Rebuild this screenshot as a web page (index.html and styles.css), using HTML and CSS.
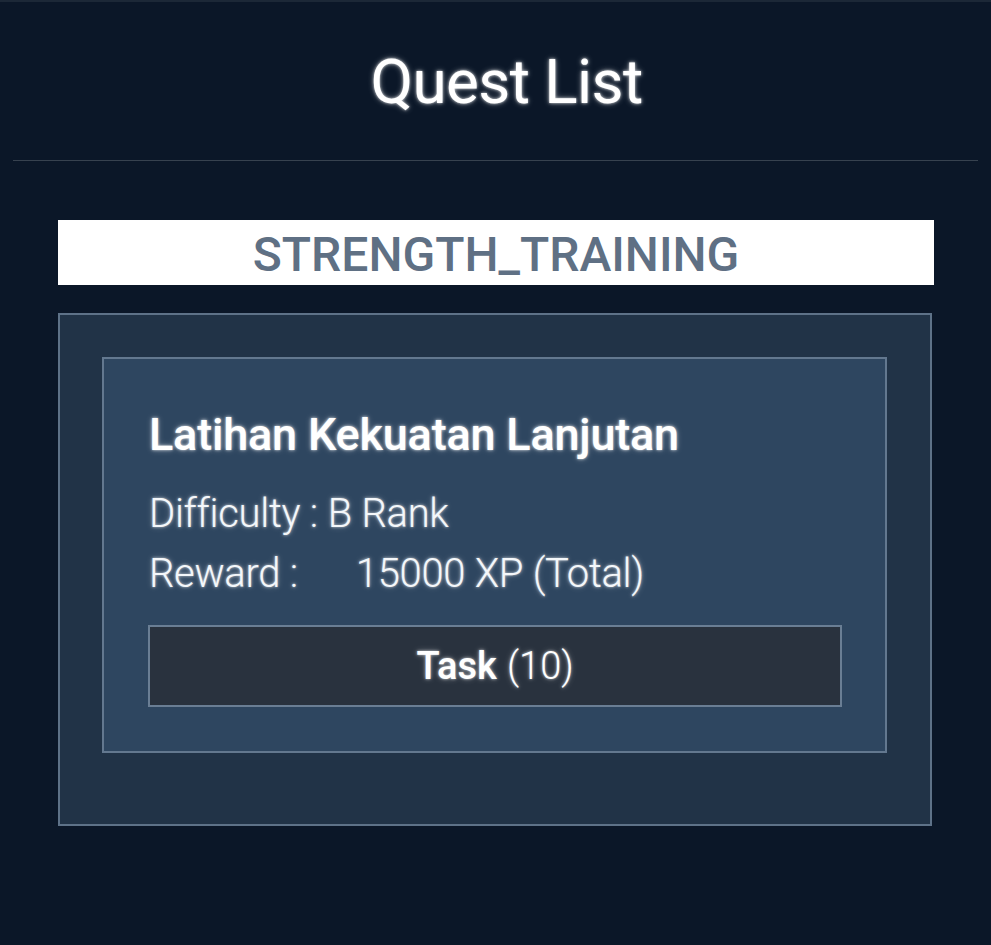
FILE: index.html
```html
<!DOCTYPE html>
<html>
<head>
<meta charset="utf-8">
<link rel="stylesheet" href="styles.css">
</head>
<body>
<div class="page">
  <header class="header">
    <h1 class="title">Quest List</h1>
  </header>
  <main class="content">
    <div class="category">STRENGTH_TRAINING</div>
    <section class="outer">
      <div class="quest">
        <h2 class="quest-title">Latihan Kekuatan Lanjutan</h2>
        <div class="row"><span class="label">Difficulty :</span><span class="value diff">B Rank</span></div>
        <div class="row"><span class="label">Reward :</span><span class="value reward">15000 XP (Total)</span></div>
        <div class="task"><b>Task</b> (10)</div>
      </div>
    </section>
  </main>
</div>
</body>
</html>
```
FILE: styles.css
```css
html, body {
  margin: 0;
  padding: 0;
  background: #0b1728;
}
body {
  font-family: Roboto, "Liberation Sans", sans-serif;
  color: #ffffff;
  height: 945px;
  overflow: hidden;
}
.page {
  border-top: 2px solid #1c2837;
}
.header {
  height: 158px;
  margin: 0 13px;
  border-bottom: 1px solid #37424f;
  display: flex;
  justify-content: center;
  align-items: flex-start;
  padding-left: 22px;
}
.title {
  margin: 44px 0 0;
  font-size: 62px;
  font-weight: 400;
  line-height: 72px;
  letter-spacing: -0.6px;
  text-shadow: 0 0 3px rgba(255,255,255,0.8), 0 0 6px rgba(255,255,255,0.4);
}
.content {
  padding: 59px 57px 0 58px;
}
.category {
  background: #ffffff;
  height: 65px;
  color: #5f7084;
  font-size: 48px;
  font-weight: 500;
  line-height: 70px;
  text-align: center;
}
.outer {
  margin-top: 28px;
  margin-right: 2px;
  background: #213347;
  border: 2px solid #5e7288;
  padding: 42px 43px 71px 42px;
}
.quest {
  background: #2e4660;
  border: 2px solid #63788f;
  padding: 51px 43px 44px 44px;
}
.quest-title {
  margin: 0 0 24px 1px;
  font-size: 45px;
  font-weight: 500;
  line-height: 50px;
  letter-spacing: -0.2px;
  text-shadow: 0 0 3px rgba(255,255,255,0.8), 0 0 6px rgba(255,255,255,0.35);
}
.row {
  display: flex;
  font-size: 40px;
  font-weight: 300;
  line-height: 60px;
  color: #f4f7fa;
  text-shadow: 0 0 3px rgba(255,255,255,0.7), 0 0 6px rgba(255,255,255,0.3);
  letter-spacing: -0.3px;
}
.label { margin-left: 1px; }
.diff { margin-left: 10px; }
.reward { margin-left: 58px; }
.task {
  margin-top: 21px;
  height: 78px;
  background: #29323e;
  border: 2px solid #6a7e94;
  display: flex;
  justify-content: center;
  align-items: center;
  font-size: 38px;
  font-weight: 300;
  text-shadow: 0 0 3px rgba(255,255,255,0.7), 0 0 6px rgba(255,255,255,0.3);
}
.task b {
  font-weight: 500;
  margin-right: 10px;
}
```
